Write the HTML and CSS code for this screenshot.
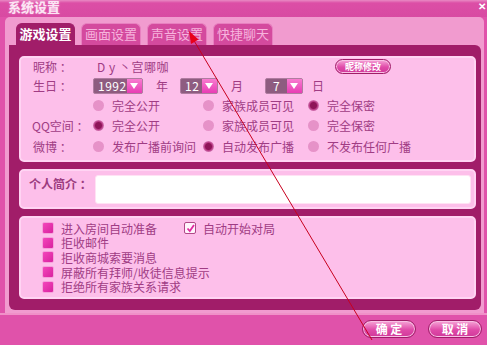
FILE: index.html
```html
<!DOCTYPE html>
<html>
<head>
<meta charset="utf-8">
<link rel="stylesheet" href="styles.css">
</head>
<body>
<div class="window">
  <div class="titlebar">
    <span class="title">系统设置</span>
    <span class="close">✕</span>
  </div>
  <div class="frame">
    <div class="tabs">
      <div class="tab active">游戏设置</div>
      <div class="tab">画面设置</div>
      <div class="tab">声音设置</div>
      <div class="tab">快捷聊天</div>
    </div>
    <div class="content">
      <div class="panel p1">
        <div class="row r1">
          <span class="lbl">昵称&nbsp;：</span>
          <span class="nick">D y 丶宫哪咖</span>
          <span class="pill small">昵称修改</span>
        </div>
        <div class="row r2">
          <span class="lbl">生日&nbsp;：</span>
          <span class="sel w50"><span class="num">1992</span><span class="dd"></span></span>
          <span class="unit u1">年</span>
          <span class="sel w38"><span class="num">12</span><span class="dd"></span></span>
          <span class="unit u2">月</span>
          <span class="sel w38"><span class="num c">7</span><span class="dd"></span></span>
          <span class="unit u3">日</span>
        </div>
        <div class="row r3">
          <span class="lbl"></span>
          <span class="opt o1"><i class="radio"></i>完全公开</span>
          <span class="opt o2"><i class="radio"></i>家族成员可见</span>
          <span class="opt"><i class="radio on"></i>完全保密</span>
        </div>
        <div class="row r4">
          <span class="lbl q">QQ空间&nbsp;：</span>
          <span class="opt o1"><i class="radio on"></i>完全公开</span>
          <span class="opt o2"><i class="radio"></i>家族成员可见</span>
          <span class="opt"><i class="radio"></i>完全保密</span>
        </div>
        <div class="row r5">
          <span class="lbl">微博&nbsp;：</span>
          <span class="opt o1"><i class="radio"></i>发布广播前询问</span>
          <span class="opt o2"><i class="radio on"></i>自动发布广播</span>
          <span class="opt"><i class="radio"></i>不发布任何广播</span>
        </div>
      </div>
      <div class="panel p2">
        <span class="lbl2">个人简介&nbsp;：</span>
        <div class="textarea"></div>
      </div>
      <div class="panel p3">
        <div class="crow">
          <span class="copt c1"><i class="cb"></i>进入房间自动准备</span>
          <span class="copt"><i class="cb checked"><svg width="9" height="9" viewBox="0 0 9 9"><path d="M1.5 4.5 L3.8 7 L8 1" fill="none" stroke="#e02aa0" stroke-width="1.8"/></svg></i>自动开始对局</span>
        </div>
        <div class="crow"><span class="copt"><i class="cb"></i>拒收邮件</span></div>
        <div class="crow"><span class="copt"><i class="cb"></i>拒收商城索要消息</span></div>
        <div class="crow"><span class="copt"><i class="cb"></i>屏蔽所有拜师/收徒信息提示</span></div>
        <div class="crow"><span class="copt"><i class="cb"></i>拒绝所有家族关系请求</span></div>
      </div>
    </div>
  </div>
  <div class="bottom">
    <span class="pill btn">确 定</span>
    <span class="pill btn">取 消</span>
  </div>
  <svg class="arrow" width="487" height="345" viewBox="0 0 487 345">
    <line x1="372" y1="340" x2="193" y2="39" stroke="#c8001e" stroke-width="1"/>
    <polygon points="189,31 198.5,39.6 191,44" fill="#e8001a"/>
  </svg>
</div>
</body>
</html>
```

FILE: styles.css
```css
* { box-sizing: border-box; margin: 0; padding: 0; }
html, body { width: 487px; height: 345px; overflow: hidden; }
body {
  font-family: "Noto Sans CJK SC", "Liberation Sans", sans-serif;
  font-size: 12px;
  background: #e052aa;
}
.window {
  position: relative;
  width: 487px;
  height: 345px;
  background: #e052aa;
  display: flex;
  flex-direction: column;
}
.titlebar {
  height: 17px;
  background: linear-gradient(#e98ac4 0, #dc4ea6 3px, #d84aa2 100%);
  display: flex;
  align-items: flex-start;
  justify-content: space-between;
  padding-left: 8px;
}
.title {
  color: #fbe6f4;
  font-size: 13px;
  font-weight: bold;
  line-height: 14px;
  text-shadow: 0 0 2px #f4a0d4;
}
.close {
  color: #fff;
  font-size: 10px;
  font-weight: bold;
  line-height: 10px;
  margin-right: 1px;
  margin-top: 1px;
}
.frame {
  margin: 0 3px 0 5px;
  height: 296px;
  background: #f19bcf;
  border-radius: 5px 5px 0 0;
  padding: 6px 3px 3px 4px;
  display: flex;
  flex-direction: column;
}
.tabs {
  display: flex;
  gap: 6px;
  padding-left: 7px;
  height: 22px;
}
.tab {
  width: 60px;
  height: 22px;
  background: #d44a9e;
  border: 1px solid #e880c0;
  border-bottom: none;
  border-radius: 6px 6px 0 0;
  color: #f7b3dd;
  font-size: 13px;
  line-height: 20px;
  text-align: center;
}
.tab.active {
  width: 59px;
  background: #a11d69;
  border-color: #a11d69;
  color: #fff;
  font-weight: bold;
}
.content {
  flex: 1;
  background: #a11d69;
  border-radius: 0 6px 6px 6px;
  padding: 11px 5px 10px 10px;
  display: flex;
  flex-direction: column;
  gap: 7px;
}
.panel {
  background: #fdbfea;
  border: 2px solid #ffd4f3;
  border-radius: 5px;
  color: #a03c84;
}
.p1 { height: 106px; padding-left: 12px; }
.row { display: flex; align-items: center; line-height: 14px; }
.r1 { height: 18px; }
.r2 { height: 20px; }
.r3 { height: 19px; }
.r4 { height: 21px; }
.r5 { height: 21px; }
.lbl { width: 60px; flex-shrink: 0; white-space: nowrap; }
.lbl.q { margin-left: -1px; width: 61px; }
.nick { width: 242px; padding-left: 4px; letter-spacing: 0.5px; }
.pill {
  border-radius: 9px;
  color: #fff;
  text-align: center;
  font-weight: bold;
  border: 1px solid #a01c68;
  background: linear-gradient(#f6a6d8, #e04aa8 55%, #d0389a);
  box-shadow: inset 0 0 0 1px #f8c0e4;
  flex-shrink: 0;
}
.small { width: 56px; height: 15px; font-size: 9px; line-height: 13px; margin-top: -2px; }
.sel {
  display: flex;
  height: 16px;
  border: 1px solid #b07ca0;
  background: #8e5c80;
  border-radius: 2px;
  flex-shrink: 0;
}
.w50 { width: 50px; }
.w38 { width: 38px; }
.num { flex: 1; color: #fff; font-size: 12px; line-height: 14px; padding-left: 4px; letter-spacing: 0.5px; }
.num.c { padding-left: 7px; }
.dd {
  width: 15px;
  background: linear-gradient(#f87cd0, #e83cb4);
  position: relative;
}
.dd::after {
  content: "";
  position: absolute;
  left: 3px;
  top: 4px;
  border-left: 4.5px solid transparent;
  border-right: 4.5px solid transparent;
  border-top: 6px solid #fff;
}
.unit { padding-left: 13px; flex-shrink: 0; }
.u1 { width: 37px; }
.u2 { width: 47px; }
.u3 { padding-left: 9px; }
.opt { display: flex; align-items: center; white-space: nowrap; flex-shrink: 0; }
.o1 { width: 110px; }
.o2 { width: 105px; }
.radio {
  display: inline-block;
  flex-shrink: 0;
  width: 11px;
  height: 11px;
  border-radius: 50%;
  background: #e692c8;
  margin: 0 8px 0 0;
}
.radio.on {
  background: radial-gradient(circle, #8e1458 0 3px, #b83a84 4px, #e090c8 6px);
}
.p2 {
  height: 40px;
  display: flex;
  padding: 4px 3px 3px 8px;
}
.lbl2 { width: 66px; font-weight: bold; padding-top: 2px; color: #9c3c80; line-height: 14px; white-space: nowrap; }
.textarea {
  flex: 1;
  background: #fff;
  border: 1px solid #ffe2f4;
  border-radius: 3px;
}
.p3 { height: 83px; padding: 3px 0 0 21px; }
.crow { display: flex; align-items: center; height: 14.6px; line-height: 13px; }
.copt { display: flex; align-items: center; white-space: nowrap; flex-shrink: 0; }
.c1 { width: 142px; }
.cb {
  display: block;
  flex: 0 0 12px;
  width: 12px;
  height: 12px;
  margin-right: 7px;
  border: 1px solid #f6a0dc;
  background: linear-gradient(135deg, #f446bc, #d8229e);
  border-radius: 2px;
}
.cb.checked {
  display: flex;
  align-items: center;
  justify-content: center;
  background: #fff4fc;
  border: 1px solid #b04888;
}
.bottom {
  flex: 1;
  background: #e052aa;
  border-top: 2px solid #f090c8;
  display: flex;
  justify-content: flex-end;
  align-items: flex-start;
  gap: 12px;
  padding: 5px 5px 0 0;
}
.btn { width: 54px; height: 18px; font-size: 12px; line-height: 15px; }
.arrow { position: absolute; left: 0; top: 0; pointer-events: none; }
```
